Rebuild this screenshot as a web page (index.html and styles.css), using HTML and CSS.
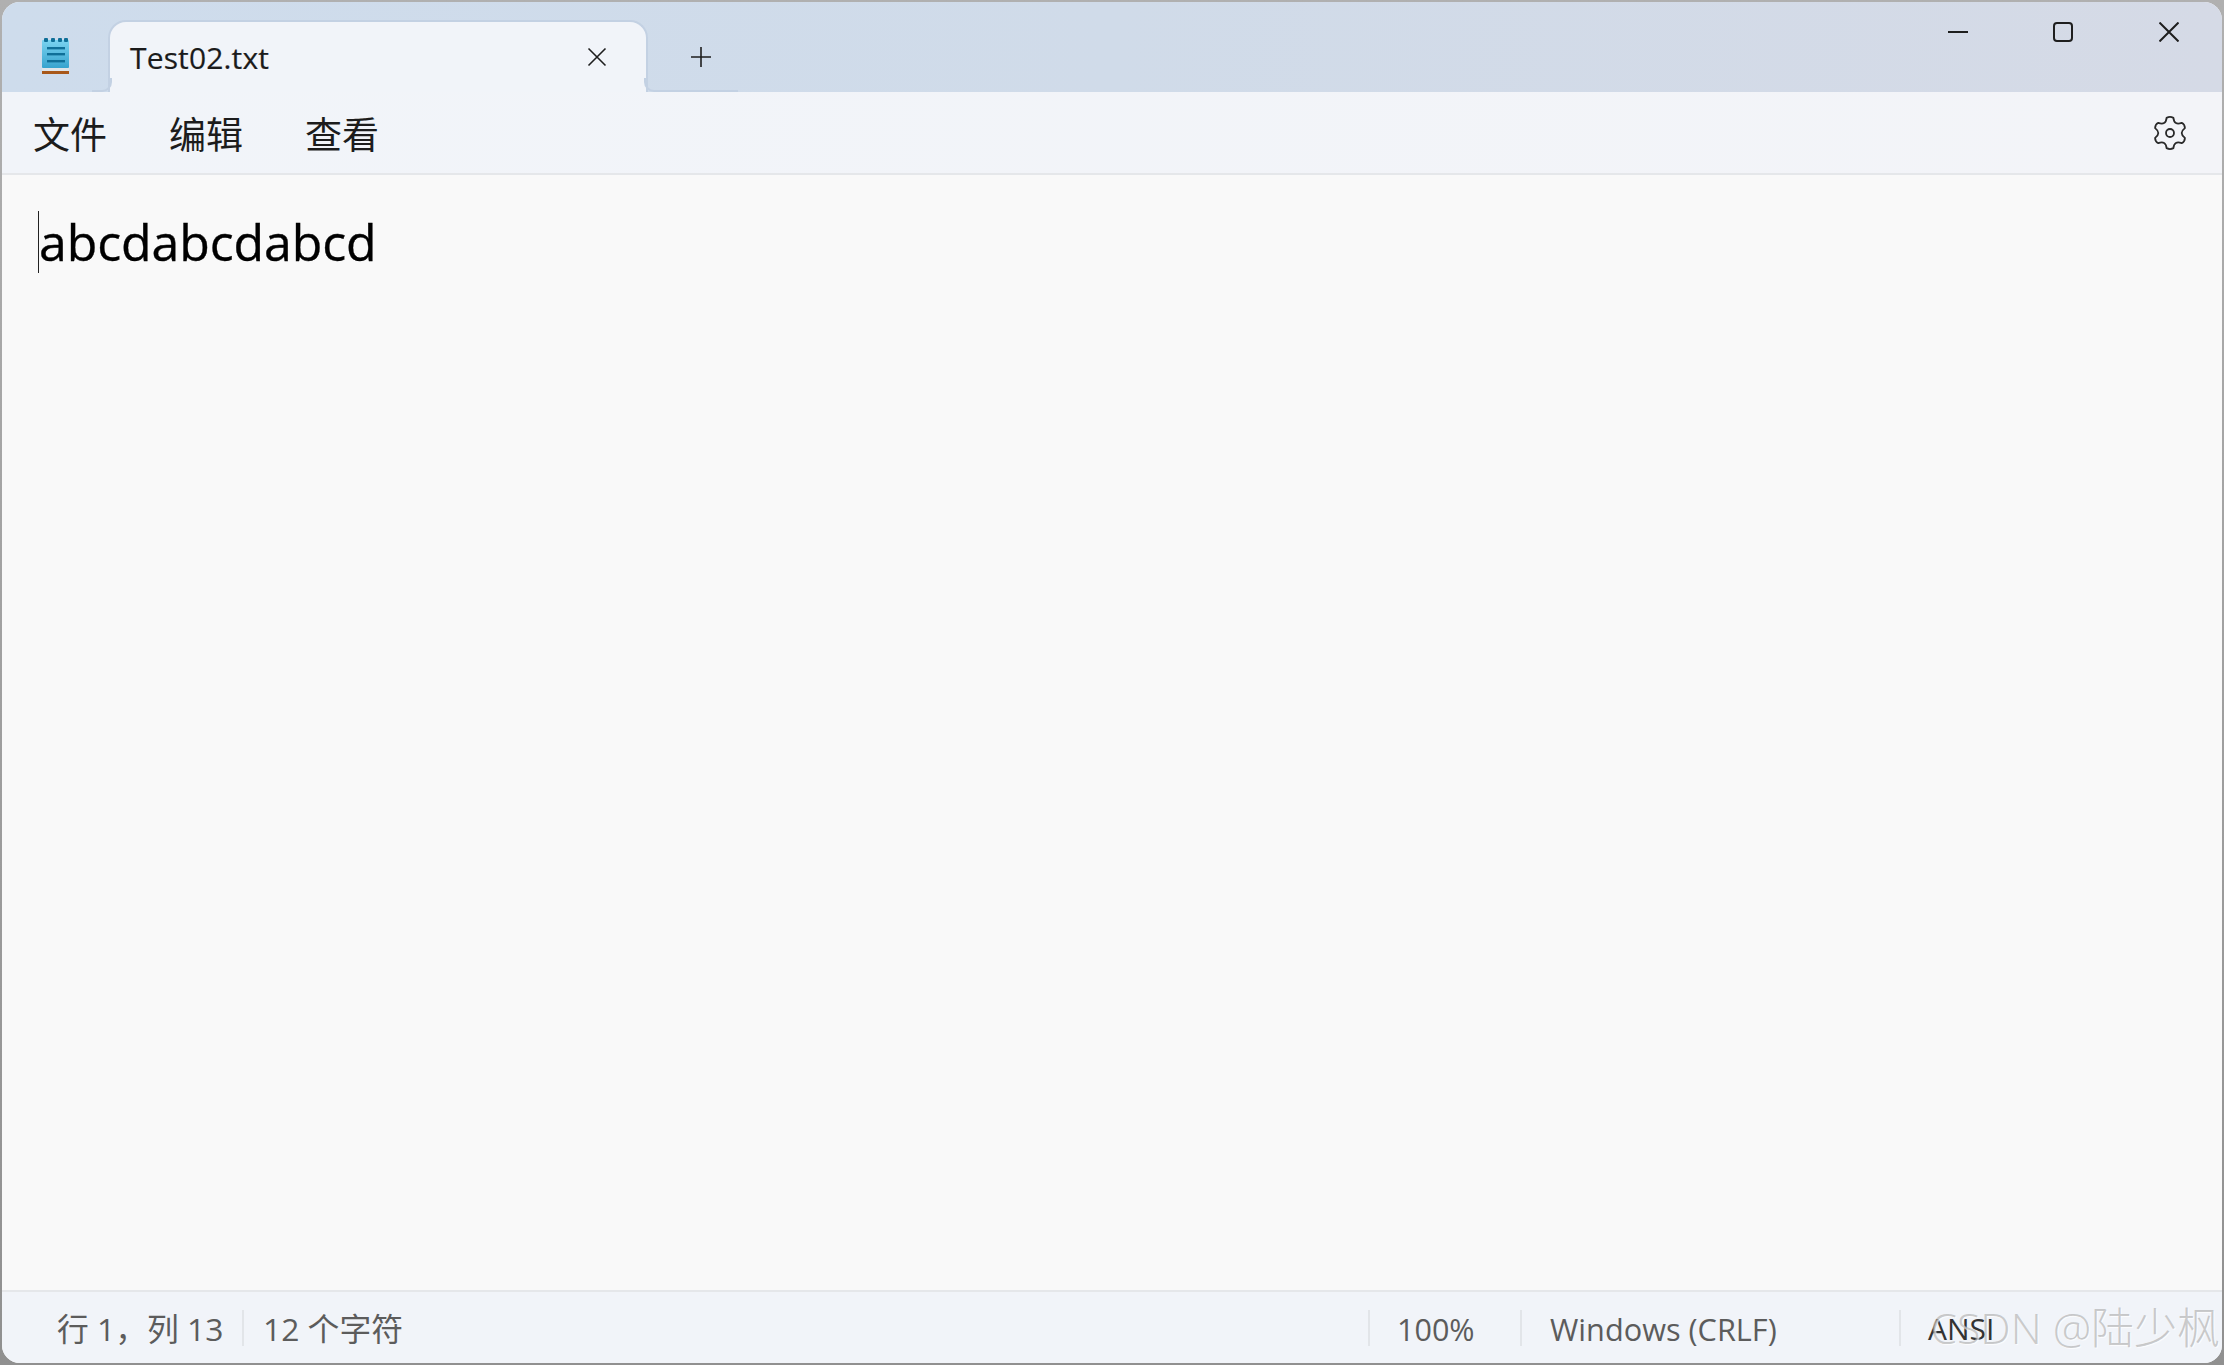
FILE: index.html
```html
<!DOCTYPE html>
<html lang="zh-CN">
<head>
<meta charset="utf-8">
<title>Test02.txt - Notepad</title>
<link rel="stylesheet" href="styles.css">
</head>
<body>
<div class="window">
  <header class="titlebar">
    <svg class="app-icon" viewBox="0 0 27 36" width="27" height="36">
      <defs><linearGradient id="pad" x1="0" y1="0" x2="0" y2="1"><stop offset="0" stop-color="#7ad3f0"/><stop offset="1" stop-color="#37a3ce"/></linearGradient></defs>
      <rect x="0" y="2" width="27" height="28" rx="1" fill="url(#pad)"/>
      <rect x="0" y="30" width="27" height="3" fill="#dfe4e8"/>
      <rect x="0" y="33" width="27" height="3" fill="#a8581a"/>
      <g fill="#0f6f98"><rect x="2" y="0" width="4" height="4" rx="1"/><rect x="9" y="0" width="4" height="4" rx="1"/><rect x="16" y="0" width="4" height="4" rx="1"/><rect x="22" y="0" width="4" height="4" rx="1"/><rect x="5" y="9" width="18" height="2.4"/><rect x="5" y="15" width="18" height="2.4"/><rect x="5" y="22" width="18" height="2.4"/></g>
    </svg>
    <div class="tab">
      <span class="tab-title">Test02.txt</span>
      <svg class="glyph thin" viewBox="0 0 20 20" width="20" height="20"><path d="M1.5 1.5 18.5 18.5M18.5 1.5 1.5 18.5"/></svg>
    </div>
    <svg class="glyph thin new-tab" viewBox="0 0 22 22" width="22" height="22"><path d="M11 1V21M1 11H21"/></svg>
    <div class="controls">
      <svg class="glyph" viewBox="0 0 20 20" width="20" height="20"><path d="M0 10H20"/></svg>
      <svg class="glyph" viewBox="0 0 20 20" width="20" height="20"><rect x="1" y="1" width="18" height="18" rx="3"/></svg>
      <svg class="glyph control-close" viewBox="0 0 20 20" width="20" height="20"><path d="M0.5 0.5 19.5 19.5M19.5 0.5 0.5 19.5"/></svg>
    </div>
  </header>
  <nav class="menubar">
    <span class="menu-item">文件</span>
    <span class="menu-item">编辑</span>
    <span class="menu-item">查看</span>
    <svg class="gear" viewBox="-17 -17 34 34" width="34" height="34"><circle cx="0" cy="0" r="4"/><path d="M-3.4-15.16Q0-17 3.4-15.16Q4.25-7.36 11.7-10.2Q14.9-8.5 14.9-4.9Q8.5 0 14.9 4.9Q14.9 8.5 11.7 10.2Q4.25 7.36 3.4 15.16Q0 17-3.4 15.16Q-4.25 7.36-11.7 10.2Q-14.9 8.5-14.9 4.9Q-8.5 0-14.9-4.9Q-14.9-8.5-11.7-10.2Q-4.25-7.36-3.4-15.16Z"/></svg>
  </nav>
  <main class="editor"><span class="caret"></span><span class="doc-text">abcdabcdabcd</span></main>
  <footer class="statusbar">
    <span class="cell cell-pos">行 1，列 13</span>
    <span class="cell cell-count">12 个字符</span>
    <span class="cell cell-zoom">100%</span>
    <span class="cell cell-eol">Windows (CRLF)</span>
    <span class="cell cell-enc">ANSI</span>
  </footer>
  <div class="watermark">CSDN @陆少枫</div>
</div>
</body>
</html>
```
FILE: styles.css
```css
* { box-sizing: border-box; }
html, body { margin: 0; height: 100%; }
body {
  background: linear-gradient(#b0b0b0, #909090);
  overflow: hidden;
  font-family: "Open Sans", "Noto Sans CJK SC", sans-serif;
}
.window {
  position: relative;
  margin: 2px;
  height: 1361px;
  display: flex;
  flex-direction: column;
  border-radius: 18px;
  overflow: hidden;
  background: #f9f9f9;
}
.titlebar {
  height: 90px;
  flex: none;
  display: flex;
  align-items: flex-start;
  padding-left: 40px;
  background: linear-gradient(90deg, #cedcec, #d0dbe9 50%, #d5dae6);
}
.app-icon { margin-top: 36px; flex: none; }
.tab {
  position: relative;
  margin-left: 39px;
  margin-top: 18px;
  width: 540px;
  height: 72px;
  flex: none;
  display: flex;
  align-items: center;
  justify-content: space-between;
  padding: 0 39px 0 20px;
  background: #f1f4f9;
  border: 2px solid #c3d1e3;
  border-bottom: 0;
  border-radius: 18px 18px 0 0;
}
.tab::before,
.tab::after {
  content: "";
  position: absolute;
  bottom: 0;
  height: 12px;
  border-bottom: 2px solid #c3d1e3;
}
.tab::before {
  right: 100%;
  width: 18px;
  border-right: 2px solid #c3d1e3;
  border-bottom-right-radius: 10px;
  margin-right: -2px;
}
.tab::after {
  left: 100%;
  width: 92px;
  border-left: 2px solid #c3d1e3;
  border-bottom-left-radius: 10px;
  margin-left: -2px;
}
.tab-title {
  padding-top: 2px;
  font-size: 30px;
  line-height: 38px;
  color: #1b1b1b;
  letter-spacing: 0.15px;
  -webkit-text-stroke: 0.2px #1b1b1b;
}
.glyph { fill: none; stroke: #1e1e1e; stroke-width: 2; flex: none; }
.thin { stroke-width: 1.6; }
.new-tab { margin: 44px 0 0 42px; }
.controls {
  margin-left: auto;
  margin-top: 20px;
  padding-right: 43px;
  display: flex;
  gap: 85px;
}
.control-close { margin-left: 1px; }
.menubar {
  height: 83px;
  flex: none;
  display: flex;
  align-items: center;
  gap: 62px;
  padding: 0 35px 0 31px;
  background: linear-gradient(90deg, #f1f4f9, #f3f4f8);
  border-bottom: 2px solid #e5e7ea;
}
.menu-item {
  padding-top: 1px;
  font-size: 37px;
  line-height: 48px;
  color: #1c1c1c;
  font-family: "Noto Sans CJK SC", sans-serif;
  font-weight: 400;
}
.gear { margin-left: auto; fill: none; stroke: #2a2a2a; stroke-width: 1.8; stroke-linejoin: round; }
.editor {
  flex: 1;
  display: flex;
  align-items: flex-start;
  padding: 36px 0 0 36px;
  background: #f9f9f9;
}
.caret { width: 1px; height: 62px; background: #222; flex: none; }
.doc-text {
  font-size: 50px;
  line-height: 62px;
  letter-spacing: -0.1px;
  color: #000;
  -webkit-text-stroke: 0.35px #000;
}
.statusbar {
  height: 73px;
  flex: none;
  display: flex;
  align-items: center;
  border-top: 2px solid #e5e7ea;
  background: #f1f4f9;
  padding-left: 55px;
  color: #5c5c5c;
}
.cell {
  height: 36px;
  line-height: 38px;
  white-space: nowrap;
  flex: none;
  font-size: 30.5px;
}
.cell-pos { width: 185px; font-size: 31.8px; }
.cell-count { border-left: 2px solid #e2e5e9; padding-left: 19px; margin-right: auto; font-size: 31.8px; }
.cell-zoom { border-left: 2px solid #e2e5e9; padding-left: 27px; width: 152px; }
.cell-eol { border-left: 2px solid #e2e5e9; padding-left: 28px; width: 379px; font-size: 30.7px; }
.cell-enc { border-left: 2px solid #e2e5e9; padding-left: 27px; width: 323px; color: #333; font-size: 30px; }
.watermark {
  position: absolute;
  right: 2px;
  bottom: 7px;
  font-size: 43px;
  line-height: 56px;
  font-weight: 300;
  color: rgba(160, 160, 160, 0.55);
  text-shadow: 1px 1px 1px rgba(255, 255, 255, 0.8);
  white-space: nowrap;
}
```
